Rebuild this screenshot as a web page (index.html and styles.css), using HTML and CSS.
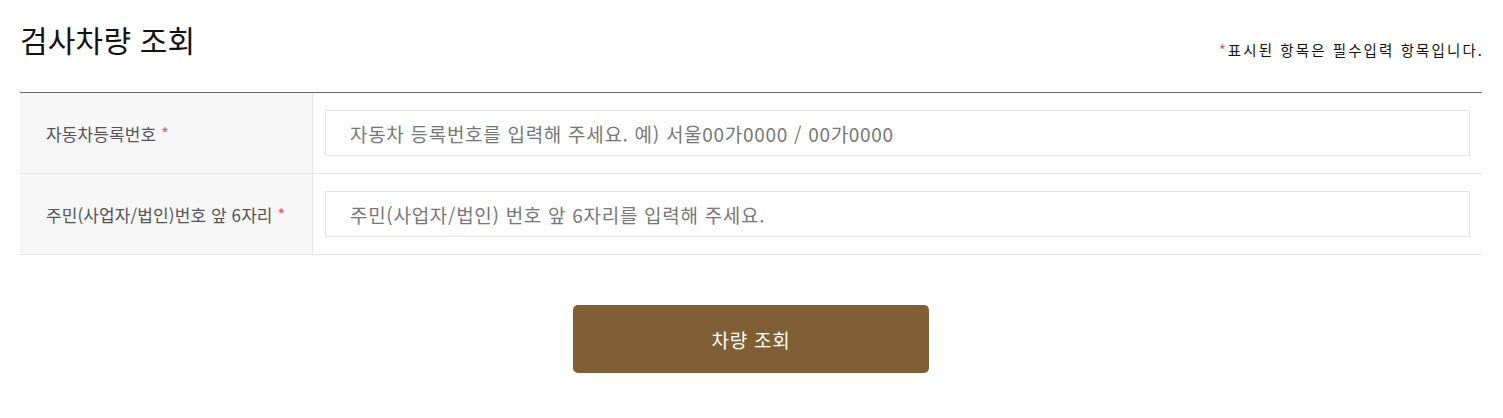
FILE: index.html
```html
<!DOCTYPE html>
<html lang="ko">
<head>
<meta charset="utf-8">
<link rel="stylesheet" href="styles.css">
</head>
<body>
<div class="page">
  <div class="head">
    <h1 class="title">검사차량 조회</h1>
    <p class="note"><span class="req">*</span>표시된 항목은 필수입력 항목입니다.</p>
  </div>
  <div class="form">
    <div class="row">
      <div class="label">자동차등록번호 <span class="req">*</span></div>
      <div class="field"><input class="input" type="text" placeholder="자동차 등록번호를 입력해 주세요. 예) 서울00가0000 / 00가0000"></div>
    </div>
    <div class="row">
      <div class="label">주민(사업자/법인)번호 앞 6자리 <span class="req">*</span></div>
      <div class="field"><input class="input" type="text" placeholder="주민(사업자/법인) 번호 앞 6자리를 입력해 주세요."></div>
    </div>
  </div>
  <div class="actions">
    <button class="btn" type="button">차량 조회</button>
  </div>
</div>
</body>
</html>
```

FILE: styles.css
```css
* { box-sizing: border-box; }
html, body { margin: 0; padding: 0; background: #fff; }
body { font-family: "Noto Sans CJK KR", "Noto Sans", sans-serif; color: #222; }
.page { padding: 0 21px 0 20px; }
.head { display: flex; justify-content: space-between; align-items: flex-end; height: 92px; padding-bottom: 34px; }
.title { margin: 0; font-size: 30px; font-weight: 400; color: #111; line-height: 1; letter-spacing: 0.2px; position: relative; top: -4px; }
.note { margin: 0; font-size: 14.5px; color: #111; line-height: 1; letter-spacing: 2.1px; margin-right: -2px; position: relative; top: -1px; }
.req { color: #e0525a; }
.form { border-top: 1px solid #666; }
.row { display: flex; border-bottom: 1px solid #e5e5e5; height: 81px; }
.label { width: 293px; flex: none; background: #f7f7f7; border-right: 1px solid #e5e5e5; display: flex; align-items: center; gap: 5px; padding-left: 26px; font-size: 17px; color: #555; letter-spacing: 0.1px; }
.label .req { font-size: 16px; }
.field { flex: 1; display: flex; align-items: center; padding: 0 12px; }
.input { width: 100%; height: 46px; border: 1px solid #e5e5e5; padding: 0 24px; font-family: inherit; font-size: 19px; letter-spacing: 0.7px; color: #333; outline: none; }
.input::placeholder { color: #777; }
.actions { display: flex; justify-content: center; padding-top: 50px; }
.btn { width: 356px; height: 68px; background: #7f5f33; color: #fff; border: none; border-radius: 5px; font-family: inherit; font-size: 19px; letter-spacing: 0.8px; cursor: pointer; }
```
